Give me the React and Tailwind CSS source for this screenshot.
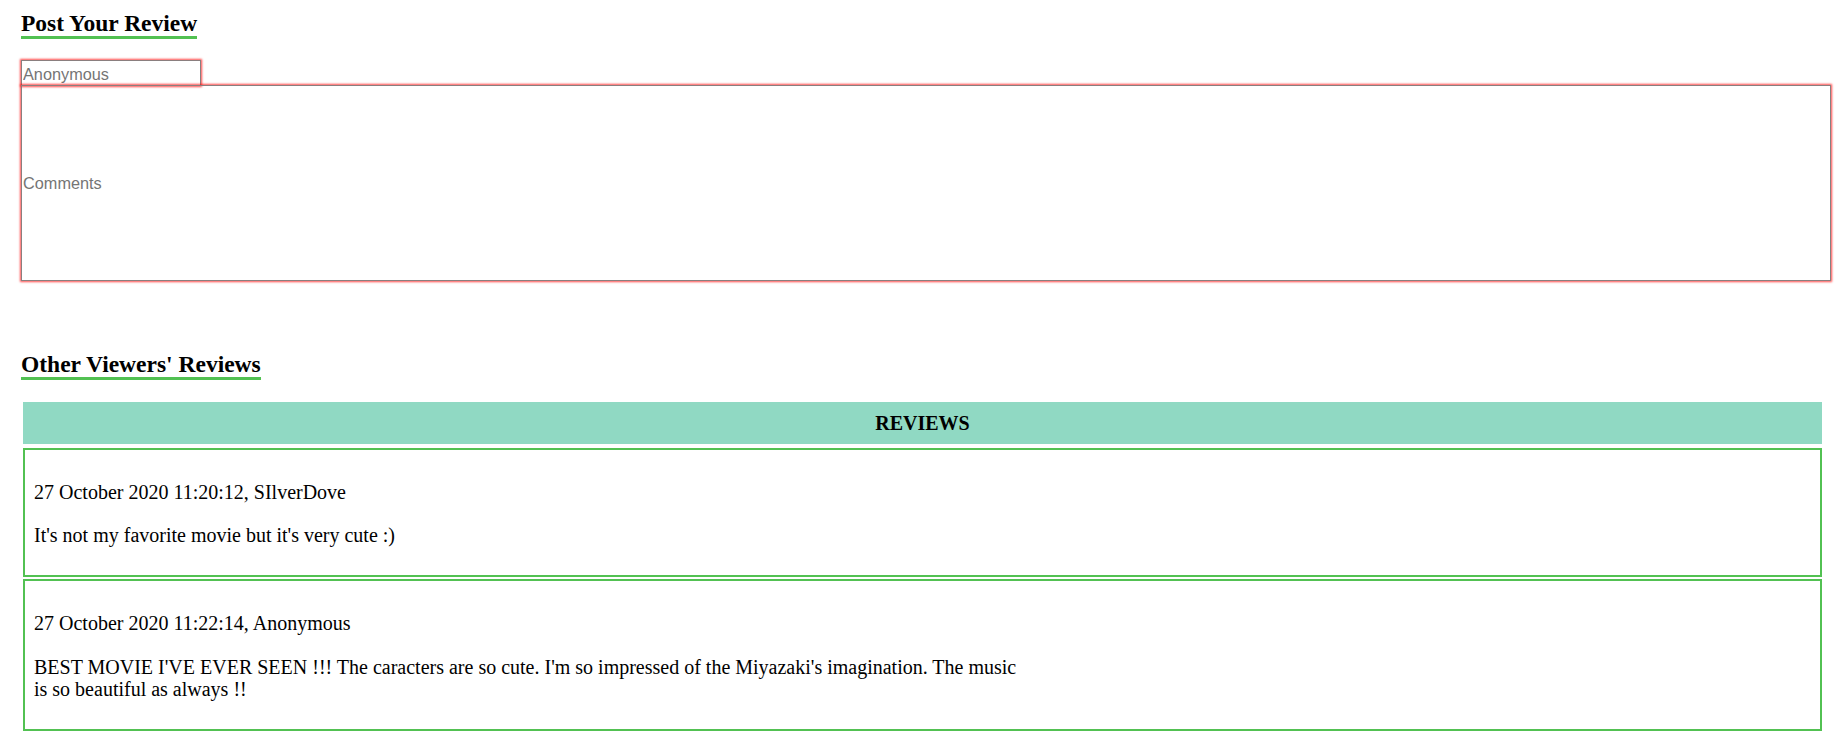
export default function App() {
  const serif = { fontFamily: '"Liberation Serif", "Times New Roman", serif' };
  const sans = { fontFamily: '"Liberation Sans", Arial, sans-serif' };
  return (
    <div className="bg-white text-black w-[1843px] min-h-[750px] pl-[21px] pt-[10px]" style={serif}>
      <h2 className="inline-block text-[23.5px] font-bold leading-[26px] border-b-[3px] border-[#52c152] m-0">
        Post Your Review
      </h2>
      <div className="flex flex-col mt-[21px]">
        <input
          type="text"
          placeholder="Anonymous"
          className="w-[180px] h-[26px] border border-[#8a7f7f] pl-[1px] pt-[2px] text-[16.3px] placeholder:text-[#757575] outline-none shadow-[0_0_2px_1px_rgba(255,0,0,0.7)]"
          style={sans}
        />
        <input
          type="text"
          placeholder="Comments"
          className="-mt-[1px] w-[1810px] h-[196px] border border-[#8a7f7f] pl-[1px] text-[16.3px] placeholder:text-[#757575] outline-none shadow-[0_0_2px_1px_rgba(255,0,0,0.7)]"
          style={sans}
        />
      </div>
      <div className="mt-[70px]">
        <h2 className="inline-block text-[23.5px] font-bold leading-[26px] border-b-[3px] border-[#52c152] m-0">
          Other Viewers' Reviews
        </h2>
      </div>
      <div className="w-[1799px] ml-[2px] mt-[22px] flex flex-col">
        <div className="h-[42px] bg-[#90d9c3] flex items-center justify-center text-[20px] font-bold">
          REVIEWS
        </div>
        <div className="mt-[4px] border-2 border-[#52c152] pl-[9px] pt-[31px] pb-[29px] text-[20px] leading-[22px]">
          <p>27 October 2020 11:20:12, SIlverDove</p>
          <p className="mt-[21px]">It's not my favorite movie but it's very cute :)</p>
        </div>
        <div className="mt-[2px] border-2 border-[#52c152] pl-[9px] pt-[31px] pb-[29px] text-[20px] leading-[22px]">
          <p>27 October 2020 11:22:14, Anonymous</p>
          <p className="mt-[22px] max-w-[992px]">
            BEST MOVIE I'VE EVER SEEN !!! The caracters are so cute. I'm so impressed of the Miyazaki's imagination. The music is so beautiful as always !!
          </p>
        </div>
      </div>
    </div>
  );
}
